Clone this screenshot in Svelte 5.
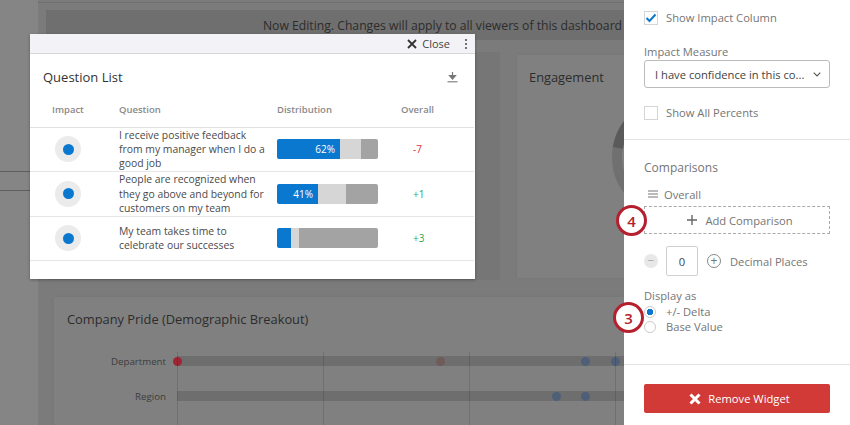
<script>
  const rows = [
    { text: 'I receive positive feedback from my manager when I do a good job', top: 63, mid: 21, label: '62%', overall: '-7', up: false },
    { text: 'People are recognized when they go above and beyond for customers on my team', top: 41, mid: 28, label: '41%', overall: '+1', up: true },
    { text: 'My team takes time to celebrate our successes', top: 14, mid: 8, label: '', overall: '+3', up: true }
  ];
  const tracks = [
    { name: 'Department', dots: [{ x: 0, c: '#9c2634' }, { x: 263, c: '#6f5c58' }, { x: 408, c: '#4f5f78' }, { x: 438, c: '#4f5f78' }] },
    { name: 'Region', dots: [{ x: 379, c: '#4f5f78' }, { x: 408, c: '#4f5f78' }] }
  ];
</script>

<div class="page">
  <div class="rail"></div>
  <div class="content">
    <div class="topline"></div>
    <div class="banner">Now Editing. Changes will apply to all viewers of this dashboard</div>
    <div class="widgets">
      <div class="widget list-behind"></div>
      <div class="widget engagement">
        <h3>Engagement</h3>
        <svg class="donut" width="120" height="120" viewBox="0 0 120 120">
          <circle cx="60" cy="60" r="55" fill="none" stroke="#707070" stroke-width="10" />
          <path d="M5.8 50.8 A55 55 0 0 1 24.6 18" fill="none" stroke="#5a5a5a" stroke-width="10" />
        </svg>
      </div>
    </div>
    <div class="widget pride">
      <h3>Company Pride (Demographic Breakout)</h3>
      <div class="chart">
        {#each tracks as t}
          <div class="chart-row">
            <span class="chart-label">{t.name}</span>
            <div class="track">
              {#each t.dots as d}
                <i class="dot" style="left: {d.x}px; background: {d.c}"></i>
              {/each}
            </div>
          </div>
        {/each}
        <div class="gridlines"><i></i><i></i><i></i><i></i></div>
      </div>
    </div>
  </div>
  <div class="left-lines"></div>

  <section class="modal">
    <header class="modal-head">
      <svg width="10" height="10" viewBox="0 0 10 10"><path d="M1 1 9 9M9 1 1 9" stroke="#333" stroke-width="1.8" fill="none" /></svg>
      <span class="close">Close</span>
      <span class="kebab"><i></i><i></i><i></i></span>
    </header>
    <div class="modal-title">
      <h2>Question List</h2>
      <svg width="11" height="12" viewBox="0 0 11 12"><path d="M5.5 1v5M2.5 4.5h6L5.5 8z" stroke="#777" stroke-width="1.2" fill="#777" /><path d="M.5 10.8h10" stroke="#777" stroke-width="1.1" /></svg>
    </div>
    <div class="table-row table-head">
      <span class="col-impact">Impact</span>
      <span>Question</span>
      <span>Distribution</span>
      <span class="col-overall">Overall</span>
    </div>
    {#each rows as r}
      <div class="table-row">
        <span class="impact"><i></i></span>
        <span class="question">{r.text}</span>
        <span class="bar">
          <span class="seg-a" style="width: {r.top}px">{r.label}</span>
          <span class="seg-b" style="width: {r.mid}px"></span>
          <span class="seg-c"></span>
        </span>
        <span class="col-overall delta" class:up={r.up}>{r.overall}</span>
      </div>
    {/each}
  </section>

  <aside class="panel">
    <div class="section first">
      <label class="check">
        <span class="box">
          <svg width="12" height="10" viewBox="0 0 12 10"><path d="M1.5 5 4.5 8 10.5 1.5" stroke="#0b78d0" stroke-width="2" fill="none" /></svg>
        </span>
        Show Impact Column
      </label>
      <div class="field-label">Impact Measure</div>
      <div class="select">
        <span>I have confidence in this co...</span>
        <svg width="8" height="5" viewBox="0 0 8 5"><path d="M.7.7 4 4 7.3.7" stroke="#555" stroke-width="1.1" fill="none" /></svg>
      </div>
      <label class="check second">
        <span class="box"></span>
        Show All Percents
      </label>
    </div>
    <div class="section middle">
      <div class="field-label comparisons">Comparisons</div>
      <div class="overall">
        <svg width="10" height="8" viewBox="0 0 10 8"><path d="M0 1h10M0 4h10M0 7h10" stroke="#777" stroke-width="1" /></svg>
        Overall
      </div>
      <div class="add">
        <svg width="10" height="10" viewBox="0 0 10 10"><path d="M5 0v10M0 5h10" stroke="#666" stroke-width="1.4" /></svg>
        Add Comparison
      </div>
      <div class="stepper">
        <span class="round minus">−</span>
        <span class="value">0</span>
        <span class="round plus">+</span>
        <span>Decimal Places</span>
      </div>
      <div class="field-label display">Display as</div>
      <div class="radio"><span class="ring on"></span>+/- Delta</div>
      <div class="radio"><span class="ring"></span>Base Value</div>
    </div>
    <div class="section last">
      <button class="remove">
        <svg width="12" height="12" viewBox="0 0 12 12"><path d="M1.5 1.5 10.5 10.5M10.5 1.5 1.5 10.5" stroke="#fff" stroke-width="3" fill="none" /></svg>
        Remove Widget
      </button>
    </div>
  </aside>

  <span class="callout four">4</span>
  <span class="callout three">3</span>
</div>

<style>
  :global(body) {
    margin: 0;
    background: #7b7b7b;
  }

  .page {
    position: relative;
    width: 850px;
    height: 425px;
    overflow: hidden;
    display: flex;
    font-family: "Open Sans", "Liberation Sans", sans-serif;
    color: #757575;
    background: #7b7b7b;
  }

  .rail {
    width: 38px;
    flex: none;
    background: #858585;
  }

  .content {
    flex: none;
    width: 812px;
    padding: 0 0 0 8px;
    box-sizing: border-box;
    background: #7b7b7b;
  }

  .topline {
    height: 2px;
    margin-left: -8px;
    border-bottom: 1px solid #6f6f6f;
  }

  .banner {
    height: 30px;
    margin-top: 7px;
    width: 793px;
    background: #6f6f6f;
    color: #2c2c2c;
    font-size: 12.2px;
    line-height: 31px;
    text-align: center;
    white-space: nowrap;
    overflow: hidden;
  }

  .widgets {
    display: flex;
    gap: 17px;
    margin-top: 12px;
    height: 228px;
  }

  .widget {
    background: #808080;
    box-shadow: 0 0 2px #757575;
  }

  .widget h3 {
    margin: 0;
    font-weight: 400;
    font-size: 12.85px;
    line-height: 18px;
    color: #2c2c2c;
  }

  .list-behind {
    width: 454px;
    background: #767676;
    box-shadow: none;
  }

  .engagement {
    flex: 1;
    padding: 13px 12px;
    margin: 3px 0 2px;
  }

  .donut {
    display: block;
    margin: 11px 0 0 83px;
  }

  .pride {
    margin: 17px 0 0 8px;
    height: 140px;
    padding: 13px 0 0 13px;
  }

  .chart {
    position: relative;
    margin-top: 28px;
  }

  .chart-row {
    display: flex;
    align-items: center;
    height: 10px;
    margin-bottom: 25px;
  }

  .chart-label {
    width: 99px;
    text-align: right;
    font-size: 9.7px;
    color: #3c3c3c;
  }

  .track {
    position: relative;
    margin-left: 11px;
    flex: 1;
    height: 10px;
    background: #6e6e6e;
  }

  .dot {
    position: absolute;
    top: 0.5px;
    width: 9px;
    height: 9px;
    margin-left: -4.5px;
    border-radius: 50%;
  }

  .gridlines {
    position: absolute;
    top: -4px;
    left: 110px;
    bottom: -40px;
    display: flex;
    gap: 145px;
  }

  .gridlines i {
    width: 1px;
    background: rgba(0, 0, 0, 0.12);
  }

  .left-lines {
    position: absolute;
    left: 0;
    top: 171px;
    width: 30px;
    height: 18px;
    border-top: 1px solid #5f5f5f;
    border-bottom: 1px solid #5f5f5f;
  }

  .modal {
    position: absolute;
    left: 30px;
    top: 34px;
    width: 445px;
    height: 245px;
    background: #fff;
    box-shadow: 0 1px 3px rgba(0, 0, 0, 0.3);
    color: #444;
  }

  .modal-head {
    height: 19px;
    display: flex;
    align-items: center;
    justify-content: flex-end;
    background: #f3f3f7;
    border-bottom: 1px solid #d8d8d8;
    font-size: 11px;
    padding-right: 5px;
  }

  .close {
    margin: 0 15px 0 5px;
  }

  .kebab {
    display: flex;
    flex-direction: column;
    gap: 2px;
    padding-right: 3px;
  }

  .kebab i {
    width: 2px;
    height: 2px;
    background: #444;
    border-radius: 50%;
  }

  .modal-title {
    height: 46px;
    display: flex;
    align-items: center;
    justify-content: space-between;
    padding: 0 17px 0 13px;
  }

  .modal-title h2 {
    margin: 0;
    font-weight: 400;
    font-size: 13px;
    color: #333;
  }

  .table-row {
    display: grid;
    grid-template-columns: 89px 158px 123px 1fr;
    align-items: center;
    height: 43.5px;
    border-bottom: 1px solid #e6e6e6;
    margin-right: 1px;
    font-size: 10.4px;
    line-height: 14.3px;
  }

  .table-head {
    height: 23.5px;
    padding-top: 3px;
    font-size: 9.5px;
    font-weight: 600;
    color: #8a8a8a;
    align-items: start;
    border-bottom-color: #e2e2e2;
  }

  .col-impact {
    padding-left: 22px;
  }

  .col-overall {
    padding-left: 1px;
  }

  .impact {
    width: 26px;
    height: 26px;
    margin-left: 25px;
    border-radius: 50%;
    background: #ebebeb;
    display: flex;
    align-items: center;
    justify-content: center;
  }

  .impact i {
    width: 11px;
    height: 11px;
    border-radius: 50%;
    background: #0b78d0;
  }

  .question {
    max-width: 150px;
    color: #4a4a4a;
  }

  .bar {
    display: flex;
    height: 20px;
    width: 101px;
    border-radius: 2px;
    overflow: hidden;
  }

  .seg-a {
    background: #0b78d0;
    color: #fff;
    font-size: 10px;
    line-height: 20px;
    text-align: right;
    padding-right: 5px;
    box-sizing: border-box;
  }

  .seg-b {
    background: #d6d6d6;
  }

  .seg-c {
    flex: 1;
    background: #a3a3a3;
  }

  .delta {
    font-size: 10px;
    color: #e0323c;
    padding-left: 13px;
  }

  .delta.up {
    color: #2fa84f;
  }

  .panel {
    position: absolute;
    top: 0;
    right: 0;
    bottom: 0;
    width: 226px;
    background: #fff;
    font-size: 11.2px;
  }

  .section {
    padding: 0 20px;
    border-bottom: 1px solid #e4e4e4;
    box-sizing: border-box;
  }

  .section.first {
    height: 140px;
    padding-top: 11px;
  }

  .section.middle {
    height: 225px;
    padding-top: 20px;
  }

  .section.last {
    border: 0;
    padding-top: 19px;
  }

  .check {
    display: flex;
    align-items: center;
    gap: 8px;
    height: 13px;
  }

  .check.second {
    margin-top: 18px;
  }

  .box {
    width: 12px;
    height: 12px;
    border: 1px solid #d5d5d5;
    display: flex;
    align-items: center;
    justify-content: center;
  }

  .field-label {
    line-height: 16px;
  }

  .first .field-label {
    margin-top: 20px;
  }

  .comparisons {
    font-size: 12px;
  }

  .select {
    height: 28px;
    box-sizing: border-box;
    border: 1px solid #bbb;
    border-radius: 3px;
    display: flex;
    align-items: center;
    justify-content: space-between;
    padding: 0 4px 0 10px;
    color: #444;
  }

  .select span {
    white-space: nowrap;
  }

  .select svg {
    margin-right: 4px;
  }

  .overall {
    display: flex;
    align-items: center;
    gap: 6px;
    margin: 10px 0 0 4px;
    height: 16px;
  }

  .add {
    height: 28px;
    margin-top: 4px;
    padding-left: 6px;
    box-sizing: border-box;
    border: 1px dashed #aaa;
    display: flex;
    align-items: center;
    justify-content: center;
    gap: 8px;
  }

  .stepper {
    display: flex;
    align-items: center;
    margin-top: 12px;
    height: 30px;
  }

  .round {
    width: 14px;
    height: 14px;
    box-sizing: border-box;
    border-radius: 50%;
    display: flex;
    align-items: center;
    justify-content: center;
    font-size: 12px;
    line-height: 1;
  }

  .minus {
    background: #e8e8e8;
    color: #aaa;
  }

  .plus {
    border: 1px solid #888;
    margin-right: 9px;
  }

  .value {
    width: 32px;
    height: 30px;
    margin: 0 9px 0 8px;
    box-sizing: border-box;
    border: 1px solid #d0d0d0;
    border-radius: 2px;
    display: flex;
    align-items: center;
    justify-content: center;
    color: #444;
  }

  .display {
    margin-top: 12px;
  }

  .radio {
    display: flex;
    align-items: center;
    gap: 10px;
    height: 15px;
    line-height: 15px;
  }

  .ring {
    width: 12px;
    height: 12px;
    box-sizing: border-box;
    border: 1px solid #ccc;
    border-radius: 50%;
  }

  .ring.on {
    background: radial-gradient(circle, #0b78d0 0 3px, #fff 3.5px);
  }

  .remove {
    width: 186px;
    height: 29px;
    border: 0;
    border-radius: 2px;
    background: #d13a36;
    color: #fff;
    font: inherit;
    display: flex;
    align-items: center;
    justify-content: center;
    gap: 7px;
    padding: 0 0 0 5px;
  }

  .callout {
    position: absolute;
    width: 31px;
    height: 31px;
    box-sizing: border-box;
    border: 3px solid #b5202f;
    border-radius: 50%;
    background: #fff;
    color: #b5202f;
    font-size: 15px;
    font-weight: 600;
    display: flex;
    align-items: center;
    justify-content: center;
  }

  .four {
    left: 616px;
    top: 205px;
  }

  .three {
    left: 613px;
    top: 302px;
  }
</style>
